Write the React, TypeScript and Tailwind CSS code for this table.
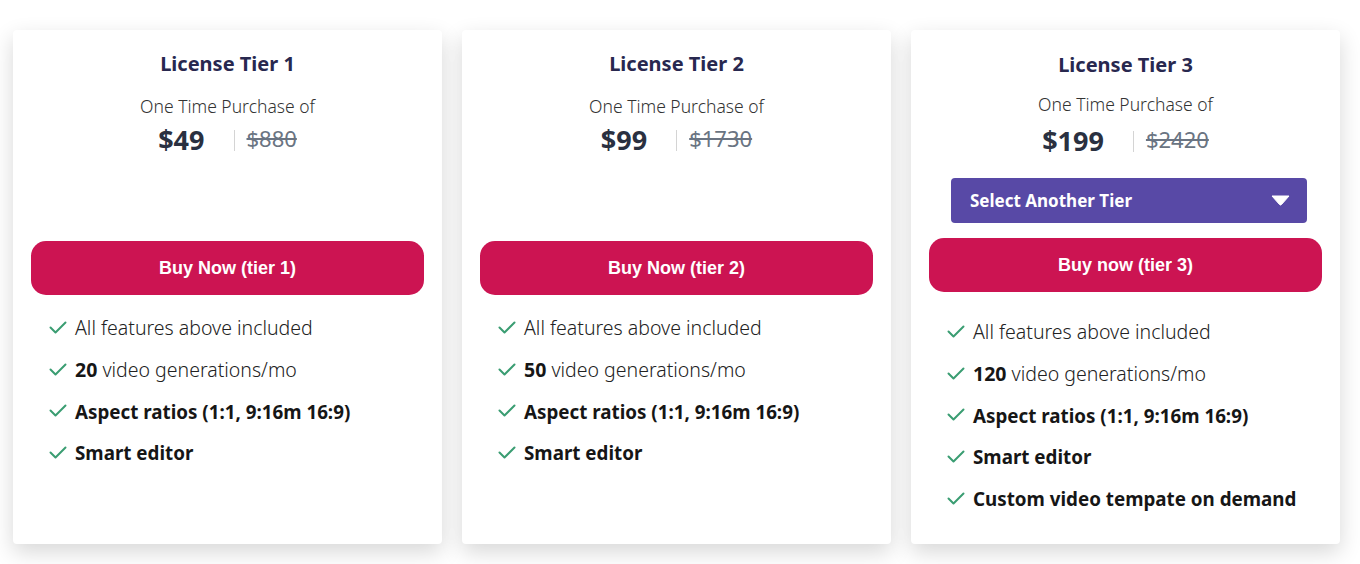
import React from "react";

type Feature = { bold?: string; rest?: string; allBold?: boolean };

const Check = () => (
  <svg width="18" height="14" viewBox="0 0 18 14" className="shrink-0">
    <polyline points="1.5,6.5 6.5,11.5 16.5,1.5" fill="none" stroke="#3a9d72" strokeWidth="2" strokeLinecap="round" strokeLinejoin="round" />
  </svg>
);

const FeatureList = ({ items, mt }: { items: Feature[]; mt: string }) => (
  <ul className={`flex flex-col pl-[36px] ${mt}`}>
    {items.map((f, i) => (
      <li key={i} className="flex items-center h-[41.7px] gap-[8px] text-[19.5px] text-[#161616]" style={{ fontFamily: '"Noto Sans", sans-serif' }}>
        <Check />
        <span>
          {f.allBold ? (
            <b className="font-bold text-[18.8px]">{f.bold}</b>
          ) : (
            <>
              <b className="font-bold">{f.bold}</b>
              <span className="font-light text-[#222]">{f.rest}</span>
            </>
          )}
        </span>
      </li>
    ))}
  </ul>
);

const Header = ({ tier, price, old, offs }: { tier: string; price: string; old: string; offs?: boolean }) => (
  <div className="flex flex-col items-center" style={{ fontFamily: '"Noto Sans", sans-serif' }}>
    <div className={`h-[28px] leading-[28px] text-[20px] font-bold text-[#28284f] ${offs ? "mt-[1px]" : ""}`}>License Tier {tier}</div>
    <div className={`${offs ? "mt-[13px]" : "mt-[16px]"} h-[24px] leading-[24px] text-[17.5px] font-light text-[#333]`}>One Time Purchase of</div>
    <div className={`${offs ? "mt-[9px]" : "mt-[6px]"} h-[32px] flex items-center`}>
      <span className="text-[27px] font-bold text-[#2a3040]">{price}</span>
      <span className="ml-[29px] w-px h-[21px] bg-[#d4d4d4]" />
      <span className="ml-[12px] text-[22px] text-[#6a7482] relative -top-[2px]">
        <span className="line-through decoration-[#6a7482]">{old}</span>
      </span>
    </div>
  </div>
);

const BuyButton = ({ label, mt }: { label: string; mt: string }) => (
  <button
    className={`mx-[18px] h-[54px] rounded-[15px] bg-[#cc1452] text-white text-[18px] font-bold ${mt}`}
    style={{ fontFamily: '"Liberation Sans", Arial, sans-serif' }}
  >
    {label}
  </button>
);

const baseFeatures = (n: string): Feature[] => [
  { bold: "", rest: "All features above included" },
  { bold: n, rest: " video generations/mo" },
  { bold: "Aspect ratios (1:1, 9:16m 16:9)", allBold: true },
  { bold: "Smart editor", allBold: true },
];

const Card = ({ children }: { children: React.ReactNode }) => (
  <div className="w-[429px] h-[514px] bg-white rounded-[4px] shadow-[0_8px_22px_rgba(0,0,0,0.16)] flex flex-col pt-[20px]">
    {children}
  </div>
);

export default function App() {
  return (
    <div className="w-[1360px] h-[564px] bg-white flex gap-[20px] pl-[13px] pt-[30px] overflow-hidden">
      <Card>
        <Header tier="1" price="$49" old="$880" />
        <BuyButton label="Buy Now (tier 1)" mt="mt-[85px]" />
        <FeatureList items={baseFeatures("20")} mt="mt-[12px]" />
      </Card>
      <Card>
        <Header tier="2" price="$99" old="$1730" />
        <BuyButton label="Buy Now (tier 2)" mt="mt-[85px]" />
        <FeatureList items={baseFeatures("50")} mt="mt-[12px]" />
      </Card>
      <Card>
        <Header tier="3" price="$199" old="$2420" offs />
        <div
          className="mt-[21px] ml-[40px] mr-[33px] h-[45px] rounded-[4px] bg-[#5849a6] flex items-center justify-between pl-[19px] pr-[17px] text-white text-[17px] font-bold"
          style={{ fontFamily: '"Noto Sans", sans-serif' }}
        >
          <span>Select Another Tier</span>
          <svg width="19" height="11" viewBox="0 0 19 11">
            <path d="M1 1 H18 L10.5 9.5 Q9.5 10.6 8.5 9.5 Z" fill="white" stroke="white" strokeWidth="1" strokeLinejoin="round" />
          </svg>
        </div>
        <BuyButton label="Buy now (tier 3)" mt="mt-[15px]" />
        <FeatureList items={[...baseFeatures("120"), { bold: "Custom video tempate on demand", allBold: true }]} mt="mt-[19px]" />
      </Card>
    </div>
  );
}
